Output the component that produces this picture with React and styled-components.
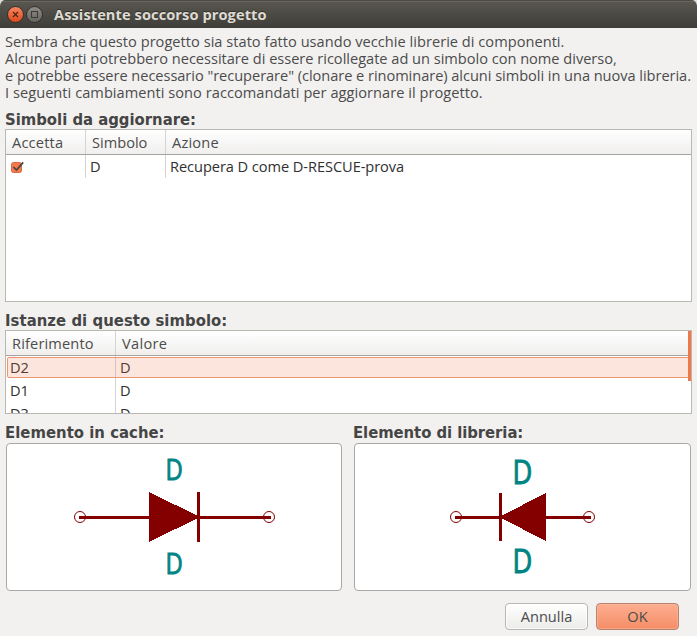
import React from 'react';
import styled, { createGlobalStyle } from 'styled-components';

const GlobalStyle = createGlobalStyle`
  * { box-sizing: border-box; }
  body { margin: 0; background: #dcdbd9; }
`;

const Window = styled.main`
  width: 697px;
  height: 636px;
  display: flex;
  flex-direction: column;
  overflow: hidden;
  background: #f2f1f0;
  border-radius: 6px 6px 0 0;
  color: #4c4c4c;
  font: 14.6px/17px "Open Sans", "Noto Sans", sans-serif;
`;

const TitleBar = styled.header`
  flex: none;
  height: 28px;
  display: flex;
  align-items: center;
  padding: 1px 7px 0;
  background: linear-gradient(#5a5850, #3e3d39);
  box-shadow: inset 0 1px #4b4a45, inset 0 2px #68665e;
`;

const WindowButton = styled.span`
  width: 17px;
  height: 17px;
  margin: 0 2px 1px 0;
  border: 1px solid #32312d;
  border-radius: 50%;
  background: ${(p) => (p.$close ? 'linear-gradient(#f88660, #e04a1b)' : 'linear-gradient(#8d8b84, #66645d)')};
  svg { display: block; width: 15px; height: 15px; }
`;

const Title = styled.h1`
  margin: 0 0 0 9px;
  color: #dfdbd2;
  font-size: 14.6px;
  font-weight: 700;
  letter-spacing: 0.09px;
  text-shadow: 0 -1px #302f2b;
`;

const Content = styled.div`
  display: flex;
  flex-direction: column;
  padding: 5px 5px 0;
`;

const Intro = styled.div`
  height: 78px;
`;

const IntroLine = styled.p`
  margin: 0;
  white-space: nowrap;
  letter-spacing: ${(p) => p.$spacing}px;
`;

const Heading = styled.h2`
  height: 18px;
  margin: 0;
  color: #454545;
  font: 700 16.5px/17px "DejaVu Sans Condensed", "DejaVu Sans", sans-serif;
  font-stretch: condensed;
  letter-spacing: ${(p) => p.$spacing || 0}px;
  white-space: nowrap;
`;

const Table = styled.div`
  position: relative;
  width: 687px;
  height: ${(p) => p.$height}px;
  margin-bottom: ${(p) => p.$gap}px;
  overflow: hidden;
  border: 1px solid #b9b8b4;
  background: #fff;
`;

const Row = styled.div`
  display: grid;
  grid-template-columns: ${(p) => p.$columns};
  height: ${(p) => p.$height || 23}px;
  color: #303030;
`;

const HeaderRow = styled(Row)`
  height: 25px;
  border-bottom: 1px solid #a5a39f;
  background: linear-gradient(#fff, #f0efee);
  color: #4c4c4c;
`;

const Cell = styled.span`
  display: flex;
  align-items: center;
  padding-left: 4px;
  border-right: 1px solid #d5d4d2;
  white-space: nowrap;
  letter-spacing: ${(p) => p.$spacing || 0}px;
  &:last-child { border-right: 0; }
  ${HeaderRow} & { padding: 1px 0 0 6px; }
`;

const InstanceRow = styled(Row)`
  position: relative;
  &::before {
    content: "";
    display: ${(p) => (p.$selected ? 'block' : 'none')};
    position: absolute;
    inset: 1px -3px 1px 1px;
    border: 1px solid #ec976f;
    border-radius: 2px;
    background: rgba(240, 119, 70, 0.19);
  }
`;

const Scrollbar = styled.div`
  position: absolute;
  top: 0;
  right: 0;
  width: 3px;
  height: 50px;
  background: #f07746;
`;

const CheckIcon = styled.svg`
  width: 15px;
  height: 14px;
`;

const Previews = styled.div`
  display: grid;
  grid-template-columns: 336px 337px;
  column-gap: 12px;
  padding-left: 1px;
`;

const Preview = styled.section`
  ${Heading} { margin: 0 0 1px -1px; }
`;

const Canvas = styled.svg`
  display: block;
  width: 100%;
  height: 148px;
  border: 1px solid #aaa8a4;
  border-radius: 4px;
  background: #fff;
`;

const Label = styled.text`
  fill: #008484;
  stroke: #008484;
  stroke-width: 0.9px;
  font: 400 28.4px "Open Sans", sans-serif;
`;

const Actions = styled.footer`
  display: flex;
  justify-content: flex-end;
  gap: 8px;
  padding: 12px 13px 0 0;
`;

const Button = styled.button`
  width: 83px;
  height: 27px;
  padding: 0 0 1px;
  border: 1px solid ${(p) => (p.$primary ? '#b68472' : '#b8b6b2')};
  border-radius: 4px;
  background: ${(p) => (p.$primary ? 'linear-gradient(#fdae91, #f58d66)' : 'linear-gradient(#fff, #ebebea)')};
  box-shadow: inset 0 0 0 1px ${(p) => (p.$primary ? 'rgba(255,190,160,.45)' : 'rgba(255,255,255,.7)')};
  color: #4c4c4c;
  font: inherit;
`;

const symbolColumns = '80px 80px 1fr';
const instanceColumns = '110px 1fr';
const instances = ['D2', 'D1', 'D3'];

const introLines = [
  ['Sembra che questo progetto sia stato fatto usando vecchie librerie di componenti.', 0.025],
  ['Alcune parti potrebbero necessitare di essere ricollegate ad un simbolo con nome diverso,', -0.015],
  ['e potrebbe essere necessario "recuperare" (clonare e rinominare) alcuni simboli in una nuova libreria.', -0.045],
  ['I seguenti cambiamenti sono raccomandati per aggiornare il progetto.', 0.04],
];

function Diode({ viewBox, ends, bar, triangle, labelX, labelScale, labelSize, baselines }) {
  return (
    <Canvas viewBox={viewBox}>
      <g shapeRendering="crispEdges" fill="#840000">
        <rect x={ends[0] - 1} y="516" width={ends[1] - ends[0] + 3} height="3" />
        <rect x={bar.x} y={bar.y} width="3" height={bar.height} />
        <polygon points={triangle} />
      </g>
      <g fill="none" stroke="#840000">
        {ends.map((x) => <circle key={x} cx={x} cy="517" r="5.5" />)}
      </g>
      {baselines.map((y) => (
        <Label key={y} transform={`translate(${labelX} ${y}) scale(${labelScale} ${labelSize})`}>D</Label>
      ))}
    </Canvas>
  );
}

export default function App() {
  return (
    <Window>
      <GlobalStyle />
      <TitleBar>
        <WindowButton $close>
          <svg viewBox="0 0 15 15"><path d="M5 5l5 5m0-5l-5 5" stroke="#552514" strokeWidth="1.3" /></svg>
        </WindowButton>
        <WindowButton>
          <svg viewBox="0 0 15 15"><rect x="4.5" y="4.5" width="6" height="6" fill="none" stroke="#3b3a35" /></svg>
        </WindowButton>
        <Title>Assistente soccorso progetto</Title>
      </TitleBar>
      <Content>
        <Intro>
          {introLines.map(([text, spacing]) => <IntroLine key={text} $spacing={spacing}>{text}</IntroLine>)}
        </Intro>
        <Heading>Simboli da aggiornare:</Heading>
        <Table $height={173} $gap={10}>
          <HeaderRow $columns={symbolColumns}>
            <Cell $spacing={0.2}>Accetta</Cell><Cell>Simbolo</Cell><Cell $spacing={0.2}>Azione</Cell>
          </HeaderRow>
          <Row $columns={symbolColumns}>
            <Cell>
              <CheckIcon viewBox="0 0 15 14">
                <rect x="1.5" y="2.5" width="10" height="10" rx="2" fill="#f4794c" stroke="#d9663d" />
                <path d="M3.4 7l3.1 3 6.7-7.6" fill="none" stroke="#454545" strokeWidth="1.7" />
              </CheckIcon>
            </Cell>
            <Cell>D</Cell>
            <Cell $spacing={-0.06}>Recupera D come D-RESCUE-prova</Cell>
          </Row>
        </Table>
        <Heading $spacing={0.06}>Istanze di questo simbolo:</Heading>
        <Table $height={84} $gap={10}>
          <HeaderRow $columns={instanceColumns}>
            <Cell $spacing={0.15}>Riferimento</Cell><Cell $spacing={0.3}>Valore</Cell>
          </HeaderRow>
          {instances.map((name, index) => (
            <InstanceRow key={name} $columns={instanceColumns} $selected={index === 0}>
              <Cell>{name}</Cell><Cell>D</Cell>
            </InstanceRow>
          ))}
          <Scrollbar />
        </Table>
        <Previews>
          <Preview>
            <Heading $spacing={0.04}>Elemento in cache:</Heading>
            <Diode
              viewBox="7 444 334 146"
              ends={[80, 269]}
              bar={{ x: 197, y: 492, height: 50 }}
              triangle="149,492 149,542 200,517"
              labelX={165.5} labelScale={0.84} labelSize={1}
              baselines={[479.5, 573.5]}
            />
          </Preview>
          <Preview>
            <Heading $spacing={-0.05}>Elemento di libreria:</Heading>
            <Diode
              viewBox="355 444 335 146"
              ends={[456, 589]}
              bar={{ x: 499, y: 493, height: 48 }}
              triangle="546,493 546,541 499,517"
              labelX={512.5} labelScale={0.96} labelSize={1.18}
              baselines={[483.5, 572.5]}
            />
          </Preview>
        </Previews>
        <Actions>
          <Button>Annulla</Button>
          <Button $primary>OK</Button>
        </Actions>
      </Content>
    </Window>
  );
}
